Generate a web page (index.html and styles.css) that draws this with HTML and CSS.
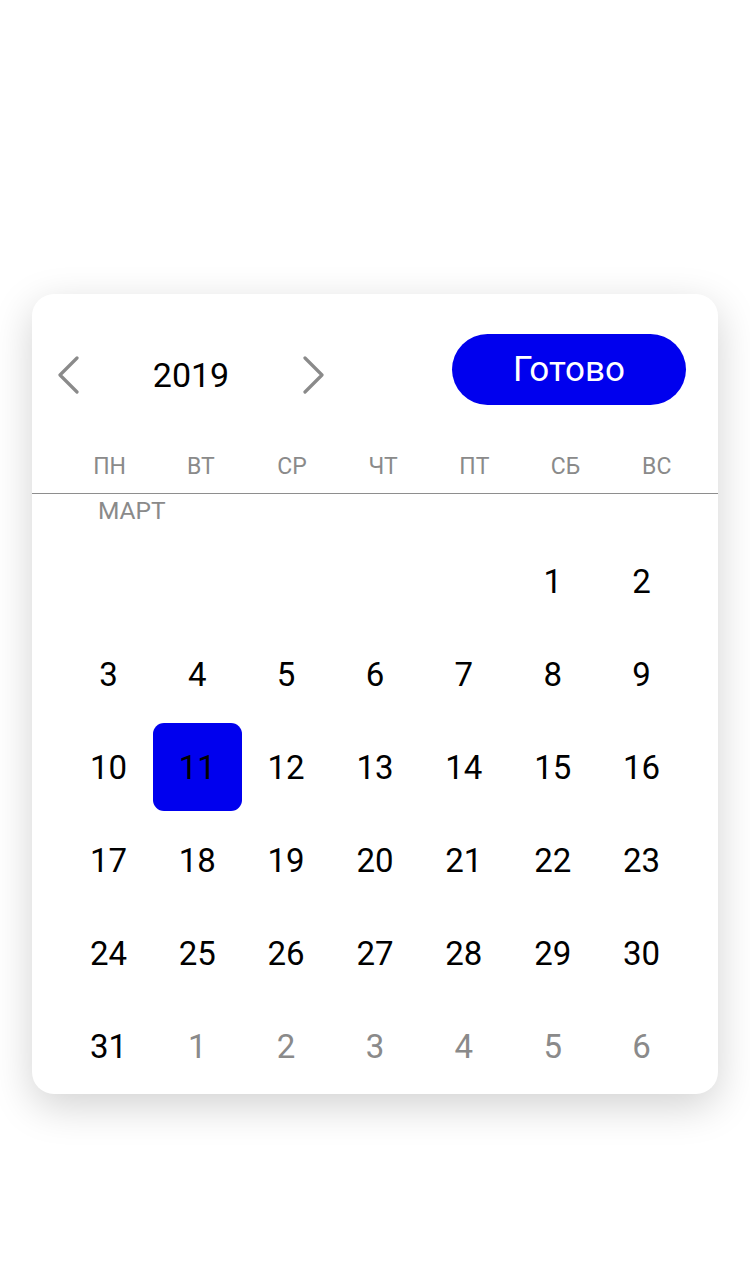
FILE: index.html
```html
<!DOCTYPE html>
<html lang="ru">
<head>
<meta charset="utf-8">
<link rel="stylesheet" href="styles.css">
</head>
<body>
<div class="card">
  <div class="header">
    <div class="nav">
      <svg class="chev" width="22" height="38" viewBox="0 0 22 38"><path d="M20 2 L3 19 L20 36" fill="none" stroke="#8a8a8a" stroke-width="3.2" stroke-linecap="round" stroke-linejoin="round"/></svg>
      <span class="year">2019</span>
      <svg class="chev" width="22" height="38" viewBox="0 0 22 38"><path d="M2 2 L19 19 L2 36" fill="none" stroke="#8a8a8a" stroke-width="3.2" stroke-linecap="round" stroke-linejoin="round"/></svg>
    </div>
    <button class="done">Готово</button>
  </div>
  <div class="weekdays">
    <span>ПН</span><span>ВТ</span><span>СР</span><span>ЧТ</span><span>ПТ</span><span>СБ</span><span>ВС</span>
  </div>
  <div class="month">МАРТ</div>
  <div class="days">
    <span></span><span></span><span></span><span></span><span></span><span>1</span><span>2</span>
    <span>3</span><span>4</span><span>5</span><span>6</span><span>7</span><span>8</span><span>9</span>
    <span>10</span><span class="sel">11</span><span>12</span><span>13</span><span>14</span><span>15</span><span>16</span>
    <span>17</span><span>18</span><span>19</span><span>20</span><span>21</span><span>22</span><span>23</span>
    <span>24</span><span>25</span><span>26</span><span>27</span><span>28</span><span>29</span><span>30</span>
    <span>31</span><span class="other">1</span><span class="other">2</span><span class="other">3</span><span class="other">4</span><span class="other">5</span><span class="other">6</span>
  </div>
</div>
</body>
</html>
```
FILE: styles.css
```css
html, body {
  margin: 0;
  background: #fff;
}
body {
  font-family: Roboto, "Liberation Sans", sans-serif;
  color: #000;
  padding-top: 294px;
  height: 985px;
}
.card {
  margin-left: 32px;
  width: 686px;
  background: #fff;
  border-radius: 22px;
  box-shadow: 0 12px 40px rgba(0, 0, 0, 0.18);
  padding-bottom: 4px;
}
.header {
  display: flex;
  align-items: flex-start;
  justify-content: space-between;
  padding: 40px 32px 0 25px;
}
.nav {
  display: flex;
  align-items: center;
  justify-content: space-between;
  width: 268px;
  margin-top: 22px;
  height: 38px;
}
.chev { display: block; }
.year {
  font-size: 34px;
  line-height: 38px;
}
.done {
  width: 234px;
  height: 71px;
  border: none;
  border-radius: 36px;
  background: #0000ee;
  color: #fff;
  font-family: inherit;
  font-size: 35px;
  padding: 0;
}
.weekdays {
  display: grid;
  grid-template-columns: repeat(7, 91.2px);
  padding: 48px 0 12px 32px;
  border-bottom: 1px solid #8e8e8e;
  font-size: 23px;
  line-height: 28px;
  color: #8a8a8a;
  text-align: center;
}
.month {
  padding-left: 66px;
  margin-top: 2px;
  font-size: 24.5px;
  line-height: 30px;
  color: #8a8a8a;
  margin-bottom: 11px;
}
.days {
  display: grid;
  grid-template-columns: repeat(7, 1fr);
  grid-auto-rows: 88px;
  row-gap: 5px;
  margin: 0 32px;
  font-size: 33px;
  text-align: center;
}
.days span {
  display: flex;
  align-items: center;
  justify-content: center;
  border-radius: 11px;
}
.days .sel {
  background: #0000ee;
  color: #000;
}
.days .other {
  color: #8a8a8a;
}
```
